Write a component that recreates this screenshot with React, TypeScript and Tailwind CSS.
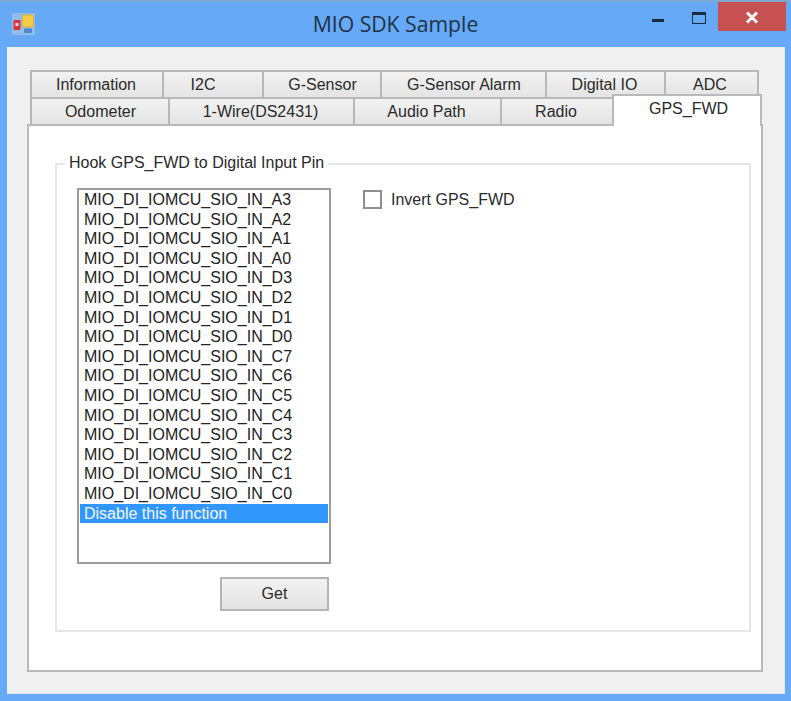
const row1: [string, string, string][] = [
  ["Information", "w-[132px]", "pr-[2px]"],
  ["I2C", "w-[100px]", "pr-[20px]"],
  ["G-Sensor", "w-[118px]", "pl-[1px]"],
  ["G-Sensor Alarm", "w-[165px]", "pl-[1px]"],
  ["Digital IO", "w-[119px]", "pr-[2px]"],
  ["ADC", "w-[95px]", "pr-[3px]"],
];
const row2: [string, string, string][] = [
  ["Odometer", "w-[138px]", "pl-[1px]"],
  ["1-Wire(DS2431)", "w-[185px]", "pr-[2px]"],
  ["Audio Path", "w-[147px]", "pr-[2px]"],
  ["Radio", "w-[112px]", "pr-[2px]"],
];
const items = [
  "A3", "A2", "A1", "A0", "D3", "D2", "D1", "D0",
  "C7", "C6", "C5", "C4", "C3", "C2", "C1", "C0",
].map((s) => `MIO_DI_IOMCU_SIO_IN_${s}`);

function Tab({ label, width, pad }: { label: string; width: string; pad: string }) {
  return (
    <div
      className={`${width} ${pad} h-[27px] flex items-center justify-center border-2 border-b-0 border-r-0 last:border-r-2 border-[#b8b8b8] bg-gradient-to-b from-[#f2f2f2] to-[#e4e4e4] text-[16px] leading-none text-[#2a2a2a]`}
    >
      {label}
    </div>
  );
}

function AppIcon() {
  return (
    <svg width="24" height="24" viewBox="0 0 24 24" className="shrink-0">
      <rect x="0" y="0" width="23" height="22" rx="1" fill="#93bde9" />
      <rect x="10.5" y="2" width="11" height="12" rx="1" fill="#f7cd45" stroke="#d9ae3a" />
      <rect x="1.5" y="7" width="7" height="10" rx="1" fill="#d8323a" />
      <rect x="3.5" y="10" width="3" height="3" fill="#f6d5d5" />
      <rect x="12" y="15.5" width="8" height="4.5" rx="1" fill="#4c86cf" />
    </svg>
  );
}

export default function App() {
  return (
    <div
      className="w-[791px] h-[701px] overflow-hidden bg-[#66a9f6] border-t-2 border-[#7fa6d2] flex flex-col"
      style={{ fontFamily: '"Liberation Sans", Arial, sans-serif' }}
    >
      <div className="relative h-[45px] shrink-0 flex items-center pl-[12px] pr-[5px]">
        <AppIcon />
        <div
          className="absolute left-0 right-0 top-[7px] text-center text-[21.2px] leading-[30px] text-[#1f3247]"
          style={{ fontFamily: '"Open Sans", "Noto Sans", sans-serif' }}
        >
          MIO SDK Sample
        </div>
        <div className="relative ml-auto self-start flex items-start">
          <div className="w-[12px] h-[3px] mt-[17px] bg-[#1c2c40]" />
          <div className="w-[14px] h-[12px] mt-[10px] ml-[28px] border border-[#1c2c40] border-t-[3px]" />
          <div className="w-[68px] h-[29px] ml-[12px] pt-[2px] bg-[#c75050] flex items-center justify-center">
            <svg width="14" height="13" viewBox="0 0 14 13">
              <path d="M2 1.5 L12 11.5 M12 1.5 L2 11.5" stroke="#fff" strokeWidth="3" />
            </svg>
          </div>
        </div>
      </div>

      <div className="mx-[7px] w-[778px] h-[647px] bg-[#f0f0f0] border-b border-r border-[#dfe6ee] pt-[23px] pl-[20px]">
        <div className="relative w-[736px] h-[54px]">
          <div className="flex ml-[3px]">
            {row1.map(([l, w, p]) => (
              <Tab key={l} label={l} width={w} pad={p} />
            ))}
          </div>
          <div className="flex ml-[3px]">
            {row2.map(([l, w, p]) => (
              <Tab key={l} label={l} width={w} pad={p} />
            ))}
            <div className="relative z-10 -mt-[3px] w-[150px] h-[32px] bg-white border-2 border-b-0 border-[#b9b9b9] flex justify-center pt-[4px] pl-[3px] text-[16px] leading-[18px] text-[#2a2a2a]">
              GPS_FWD
            </div>
          </div>
        </div>

        <div className="w-[736px] h-[548px] bg-white border-2 border-[#b9b9b9] pt-[37px] pl-[26px]">
          <div className="relative w-[696px] h-[469px] border-2 border-[#e6e6e6] pt-[23px] pl-[20px]">
            <div className="absolute left-[8px] -top-[11px] bg-white px-[4px] text-[16px] leading-[18px] text-[#2a2a2a]">
              Hook GPS_FWD to Digital Input Pin
            </div>
            <div className="flex items-start">
              <div className="w-[254px]">
                <div className="h-[376px] border-2 border-[#9c9ca0] bg-white pl-[1px] pr-[1px]">
                  {items.map((t) => (
                    <div key={t} className="h-[19.6px] pl-[4px] text-[16px] leading-[19.6px] text-[#222]">
                      {t}
                    </div>
                  ))}
                  <div className="h-[19.6px] pl-[4px] bg-[#3297fd] text-[16px] leading-[19.6px] text-[#f2f8ff]">
                    Disable this function
                  </div>
                </div>
                <button className="mt-[13px] ml-[143px] w-[109px] h-[34px] border-2 border-[#b4b4b4] bg-gradient-to-b from-[#f2f2f2] to-[#e3e3e3] text-[16px] leading-none text-[#2a2a2a]">
                  Get
                </button>
              </div>
              <div className="flex items-center ml-[32px] mt-[2px] h-[19px]">
                <div className="w-[19px] h-[19px] border-2 border-[#8e8e8e] bg-white" />
                <span className="ml-[9px] text-[16px] leading-[18px] text-[#2a2a2a]">Invert GPS_FWD</span>
              </div>
            </div>
          </div>
        </div>
      </div>
    </div>
  );
}
